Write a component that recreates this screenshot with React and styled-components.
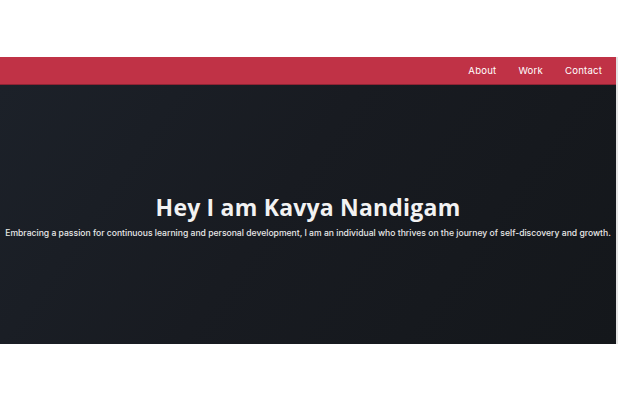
import React from 'react';
import styled, { createGlobalStyle } from 'styled-components';

const GlobalStyle = createGlobalStyle`
    body {
        margin: 0;
        background: #fff;
        font-family: "Inter", "Lato", sans-serif;
    }
`;

const links = ['About', 'Work', 'Contact'];

const App = () => {
    return (
        <>
            <GlobalStyle />
            <Page>
                <Navbar>
                    {links.map((link) => (
                        <NavLink key={link}>{link}</NavLink>
                    ))}
                </Navbar>
                <Hero>
                    <Title>Hey I am Kavya Nandigam</Title>
                    <Tagline>
                        Embracing a passion for continuous learning and personal development, I am an individual who thrives on the journey of self-discovery and growth.
                    </Tagline>
                </Hero>
            </Page>
        </>
    );
};

const Page = styled.div`
    width: 616px;
    margin-top: 57px;
    border-right: 2px solid #e4e4e4;
`;

const Navbar = styled.nav`
    height: 27px;
    background: #c03246;
    border-bottom: 1px solid #8e2434;
    display: flex;
    align-items: center;
    justify-content: flex-end;
    gap: 22px;
    padding-right: 14px;
`;

const NavLink = styled.a`
    color: #fff;
    font-size: 9.6px;
    font-weight: 400;
    letter-spacing: 0.2px;
    cursor: pointer;
`;

const Hero = styled.section`
    height: 259px;
    background: linear-gradient(125deg, #1c2129 0%, #181b21 45%, #14171b 100%);
    display: flex;
    flex-direction: column;
    align-items: center;
    justify-content: center;
    padding-top: 4px;
    box-sizing: border-box;
`;

const Title = styled.h1`
    margin: 0;
    color: #f2f2f2;
    font-family: "Open Sans", "Inter", sans-serif;
    font-size: 23px;
    font-weight: 700;
    letter-spacing: 0.2px;
    line-height: 28px;
`;

const Tagline = styled.p`
    margin: 5px 0 0;
    color: #e8e8e8;
    font-size: 8.6px;
    font-weight: 500;
    white-space: nowrap;
    line-height: 14px;
`;

export default App;
